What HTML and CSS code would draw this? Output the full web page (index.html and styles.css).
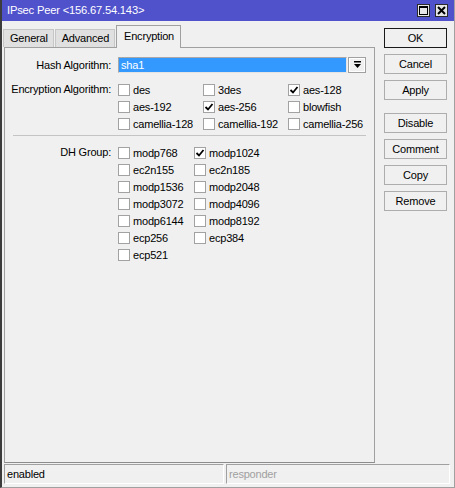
FILE: index.html
```html
<!DOCTYPE html>
<html>
<head>
<meta charset="utf-8">
<link rel="stylesheet" href="styles.css">
</head>
<body>
<div class="window">
  <div class="titlebar">
    <span class="title">IPsec Peer &lt;156.67.54.143&gt;</span>
    <div class="tbtns">
      <span class="tbtn"><svg width="11" height="11" viewBox="0 0 11 11"><rect x="1.5" y="1.5" width="8" height="8" fill="none" stroke="#000" stroke-width="1"/><rect x="1" y="1" width="9" height="2" fill="#000"/></svg></span>
      <span class="tbtn"><svg width="11" height="11" viewBox="0 0 11 11"><path d="M2 2 L9 9 M9 2 L2 9" stroke="#000" stroke-width="2"/></svg></span>
    </div>
  </div>
  <div class="content">
    <div class="main">
      <div class="tabs">
        <div class="tab">General</div>
        <div class="tab">Advanced</div>
        <div class="tab active">Encryption</div>
      </div>
      <div class="panel">
        <div class="row hash">
          <div class="lbl">Hash Algorithm:</div>
          <div class="field">sha1</div>
          <div class="drop"><svg width="9" height="8" viewBox="0 0 9 8"><rect x="1" y="0" width="7" height="1.5" fill="#000"/><polygon points="1,3 8,3 4.5,7" fill="#000"/></svg></div>
        </div>
        <div class="row enc">
          <div class="lbl">Encryption Algorithm:</div>
          <div class="grid g3">
            <label class="cb"><span class="box"></span>des</label>
            <label class="cb"><span class="box"></span>3des</label>
            <label class="cb"><span class="box on"><svg width="10" height="10" viewBox="0 0 10 10"><path d="M1.5 5 L4 7.5 L8.5 2" fill="none" stroke="#000" stroke-width="1.8"/></svg></span>aes-128</label>
            <label class="cb"><span class="box"></span>aes-192</label>
            <label class="cb"><span class="box on"><svg width="10" height="10" viewBox="0 0 10 10"><path d="M1.5 5 L4 7.5 L8.5 2" fill="none" stroke="#000" stroke-width="1.8"/></svg></span>aes-256</label>
            <label class="cb"><span class="box"></span>blowfish</label>
            <label class="cb"><span class="box"></span>camellia-128</label>
            <label class="cb"><span class="box"></span>camellia-192</label>
            <label class="cb"><span class="box"></span>camellia-256</label>
          </div>
        </div>
        <div class="sep"></div>
        <div class="row dh">
          <div class="lbl">DH Group:</div>
          <div class="grid g2">
            <label class="cb"><span class="box"></span>modp768</label>
            <label class="cb"><span class="box on"><svg width="10" height="10" viewBox="0 0 10 10"><path d="M1.5 5 L4 7.5 L8.5 2" fill="none" stroke="#000" stroke-width="1.8"/></svg></span>modp1024</label>
            <label class="cb"><span class="box"></span>ec2n155</label>
            <label class="cb"><span class="box"></span>ec2n185</label>
            <label class="cb"><span class="box"></span>modp1536</label>
            <label class="cb"><span class="box"></span>modp2048</label>
            <label class="cb"><span class="box"></span>modp3072</label>
            <label class="cb"><span class="box"></span>modp4096</label>
            <label class="cb"><span class="box"></span>modp6144</label>
            <label class="cb"><span class="box"></span>modp8192</label>
            <label class="cb"><span class="box"></span>ecp256</label>
            <label class="cb"><span class="box"></span>ecp384</label>
            <label class="cb"><span class="box"></span>ecp521</label>
          </div>
        </div>
      </div>
    </div>
    <div class="side">
      <div class="btn default">OK</div>
      <div class="btn">Cancel</div>
      <div class="btn">Apply</div>
      <div class="btn spaced">Disable</div>
      <div class="btn">Comment</div>
      <div class="btn">Copy</div>
      <div class="btn">Remove</div>
    </div>
  </div>
  <div class="status">
    <div class="sbox first">enabled</div>
    <div class="sbox dim">responder</div>
  </div>
</div>
</body>
</html>
```

FILE: styles.css
```css
html, body {
  margin: 0;
  padding: 0;
  background: #f0f0f0;
}
body {
  font-family: "Liberation Sans", Arial, sans-serif;
  font-size: 11px;
  letter-spacing: -0.2px;
  color: #000;
}
.window {
  width: 455px;
  height: 488px;
  box-sizing: border-box;
  border-left: 2px solid #3c3c3c;
  border-right: 1px solid #a0a0a0;
  border-bottom: 1px solid #a0a0a0;
  display: flex;
  flex-direction: column;
  background: #f0f0f0;
}
.titlebar {
  height: 21px;
  flex: none;
  background: #5052cc;
  color: #fff;
  display: flex;
  align-items: center;
  justify-content: space-between;
  padding: 0 6px 0 5px;
  font-size: 11.2px;
}
.title { line-height: 21px; }
.tbtns {
  display: flex;
  gap: 5px;
  align-self: flex-start;
  margin-top: 4px;
}
.tbtn {
  width: 13px;
  height: 13px;
  box-sizing: border-box;
  border: 1px solid #2a2a2a;
  background: #e6e6e6;
  display: flex;
  align-items: center;
  justify-content: center;
}
.content {
  height: 442px;
  flex: none;
  display: flex;
}
.main {
  width: 371px;
  margin-left: 2px;
  padding-top: 4px;
  display: flex;
  flex-direction: column;
}
.tabs {
  height: 22px;
  display: flex;
  align-items: flex-end;
  position: relative;
  z-index: 1;
}
.tab {
  height: 18px;
  box-sizing: border-box;
  padding: 0 5px 0 6px;
  line-height: 17px;
  background: #e0e0e0;
  border: 1px solid #c6c6c6;
  border-bottom: none;
  margin-right: 1px;
}
.tab:first-child { margin-left: -1px; }
.tab.active {
  height: 23px;
  margin-bottom: -1px;
  padding: 0 6px 0 7px;
  line-height: 21px;
  background: #f0f0f0;
  border-color: #a0a0a0;
}
.panel {
  flex: 1;
  border: 1px solid #a0a0a0;
  border-bottom-color: #8c8c8c;
  padding-top: 9px;
}
.row {
  display: flex;
  align-items: flex-start;
}
.lbl {
  width: 106px;
  padding-right: 1px;
  margin-right: 6px;
  text-align: right;
  line-height: 17px;
  flex: none;
}
.hash { height: 16px; }
.hash .lbl { line-height: 16px; }
.field {
  width: 229px;
  height: 16px;
  box-sizing: border-box;
  background: #3399ff;
  color: #fff;
  border: 1px solid #a8a8a8;
  border-right-color: #e4e4e4;
  border-bottom-color: #e4e4e4;
  padding-left: 2px;
  line-height: 14px;
}
.drop {
  width: 18px;
  height: 16px;
  box-sizing: border-box;
  margin-left: 1px;
  border: 1px solid #a0a0a0;
  box-shadow: inset 0 0 0 1px #fff;
  background: #f0f0f0;
  display: flex;
  align-items: center;
  justify-content: center;
}
.enc { margin-top: 8px; }
.grid {
  display: grid;
  grid-auto-rows: 17px;
}
.g3 { grid-template-columns: repeat(3, 85px); }
.g2 { grid-template-columns: repeat(2, 76px); }
.cb {
  display: flex;
  align-items: center;
  white-space: nowrap;
}
.box {
  width: 12px;
  height: 12px;
  box-sizing: border-box;
  border: 1px solid #a2a2a2;
  background: #fff;
  margin-right: 3px;
  flex: none;
  display: flex;
  align-items: center;
  justify-content: center;
}
.sep {
  height: 0;
  border-top: 1px solid #c4c4c4;
  margin: 3px 8px 0 8px;
}
.dh { margin-top: 8px; }
.side {
  margin-left: 9px;
  width: 63px;
  padding-top: 7px;
  display: flex;
  flex-direction: column;
  gap: 6px;
}
.btn {
  height: 20px;
  box-sizing: border-box;
  border: 1px solid #adadad;
  background: #f0f0f0;
  text-align: center;
  line-height: 18px;
}
.btn.default { border-color: #1a1a1a; }
.btn.spaced { margin-top: 7px; }
.status {
  display: flex;
  margin: 1px 4px 0 2px;
  height: 20px;
  gap: 2px;
}
.sbox {
  box-sizing: border-box;
  height: 20px;
  border: 1px solid #a0a0a0;
  border-right-color: #fff;
  border-bottom-color: #fff;
  padding-left: 2px;
  line-height: 18px;
}
.sbox.first { width: 220px; }
.sbox.dim { flex: 1; color: #a0a0a0; }
```
